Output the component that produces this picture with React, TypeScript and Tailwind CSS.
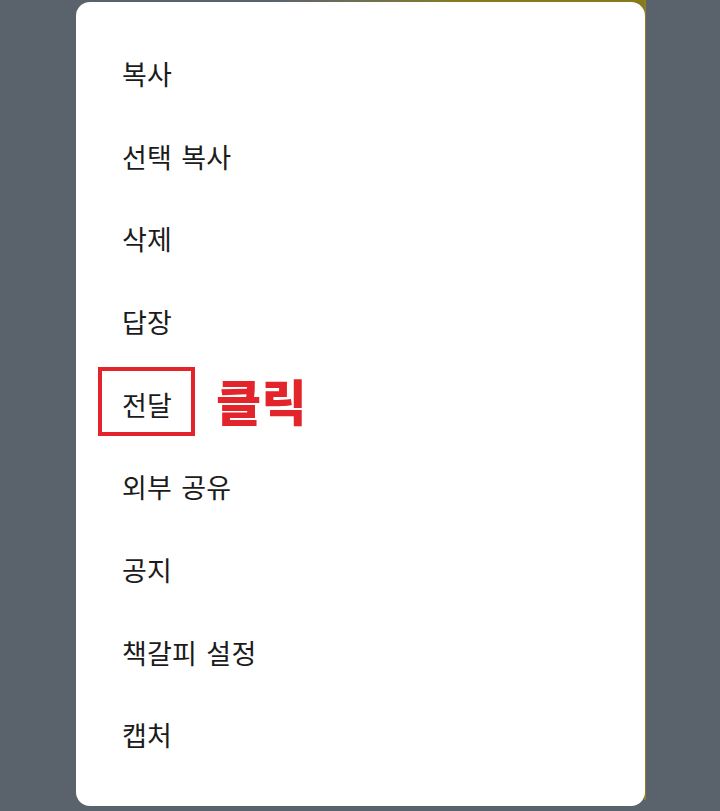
import React from 'react';

const menuItems = ['복사', '선택 복사', '삭제', '답장', '전달', '외부 공유', '공지', '책갈피 설정', '캡처'];

export default function App() {
  return (
    <div
      className="relative h-[811px] w-[720px] overflow-hidden bg-[#5a636c]"
      style={{ fontFamily: '"Noto Sans CJK KR", "Noto Sans", sans-serif' }}
    >
      {/* olive strip from the screen behind */}
      <div className="absolute left-[270px] top-0 h-[20px] w-[376px] bg-gradient-to-r from-[#5a636c] via-[#857b1c] to-[#857b1c]" />
      <div className="absolute left-[644px] top-0 h-[800px] w-[2px] bg-[#8a7f22]" />

      <div className="relative ml-[76px] mt-[2px] h-[804px] w-[569px] rounded-[14px] bg-white pt-[30px]">
        <ul className="flex flex-col">
          {menuItems.map((item) => (
            <li
              key={item}
              className="relative flex h-[82.7px] items-center pl-[46px] text-[27px] leading-none tracking-[0.2px] text-[#1b1b1b] [word-spacing:3px]"
            >
              {item}
              {item === '전달' && (
                <>
                  <span className="absolute left-[22px] top-[4px] h-[69px] w-[97px] border-[4px] border-[#e3242b]" />
                  <span className="absolute left-[140px] top-[12px] text-[49px] font-black leading-none tracking-[0.5px] text-[#e3242b]">
                    클릭
                  </span>
                </>
              )}
            </li>
          ))}
        </ul>
      </div>
    </div>
  );
}
